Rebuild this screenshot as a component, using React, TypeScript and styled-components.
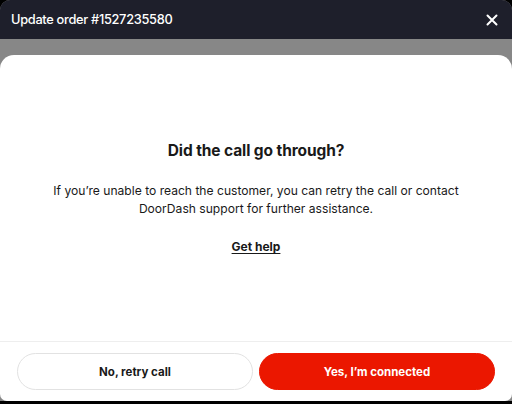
import styled, { createGlobalStyle } from "styled-components";

const GlobalStyle = createGlobalStyle`
  html, body {
    margin: 0;
    padding: 0;
    background: #000;
  }
  body {
    font-family: Inter, "Noto Sans", sans-serif;
  }
`;

const Page = styled.div`
  width: 512px;
  height: 404px;
  background: #000;
  overflow: hidden;
`;

const Window = styled.div`
  width: 512px;
  height: 401px;
  display: flex;
  flex-direction: column;
  border-radius: 10px 10px 0 0;
  overflow: hidden;
  background: #878787;
`;

const TopBar = styled.header`
  height: 39px;
  flex: none;
  display: flex;
  align-items: center;
  justify-content: space-between;
  padding: 0 12px 0 11px;
  background: #1e1f2b;
  color: #fff;
`;

const TopTitle = styled.h1`
  margin: 0;
  font-size: 12.8px;
  font-weight: 500;
  letter-spacing: -0.3px;
`;

const CloseButton = styled.button`
  border: none;
  background: none;
  padding: 0;
  width: 16px;
  height: 16px;
  display: flex;
  align-items: center;
  justify-content: center;
  cursor: pointer;
`;

const Backdrop = styled.div`
  flex: 1;
  display: flex;
  flex-direction: column;
  padding-top: 16px;
`;

const Sheet = styled.section`
  flex: 1;
  display: flex;
  flex-direction: column;
  background: #fff;
  border-radius: 14px 14px 7px 7px;
`;

const Content = styled.div`
  flex: 1;
  display: flex;
  flex-direction: column;
  align-items: center;
  text-align: center;
  padding: 86px 40px 0;
`;

const Heading = styled.h2`
  margin: 0;
  font-size: 15.5px;
  font-weight: 700;
  color: #191919;
  letter-spacing: -0.1px;
`;

const Message = styled.p`
  margin: 22px 0 0;
  font-size: 12.1px;
  line-height: 18px;
  color: #191919;
`;

const HelpLink = styled.a`
  margin-top: 21px;
  font-size: 12px;
  font-weight: 700;
  color: #191919;
  text-decoration: underline;
  text-underline-offset: 2px;
  cursor: pointer;
`;

const Footer = styled.footer`
  flex: none;
  display: flex;
  gap: 6px;
  padding: 11px 17px 11px;
  border-top: 1px solid #eeeeee;
`;

const ActionButton = styled.button<{ $primary?: boolean }>`
  flex: 1;
  height: 37px;
  border-radius: 19px;
  font-family: inherit;
  font-size: 11.5px;
  font-weight: 700;
  cursor: pointer;
  border: 1px solid ${(p) => (p.$primary ? "#eb1700" : "#e2e2e2")};
  background: ${(p) => (p.$primary ? "#eb1700" : "#fff")};
  color: ${(p) => (p.$primary ? "#fff" : "#191919")};
`;

function App() {
  return (
    <Page>
      <GlobalStyle />
      <Window>
        <TopBar>
          <TopTitle>Update order #1527235580</TopTitle>
          <CloseButton aria-label="Close">
            <svg width="12" height="12" viewBox="0 0 12 12">
              <path d="M1.5 1.5 L10.5 10.5 M10.5 1.5 L1.5 10.5" stroke="#fff" strokeWidth="2" strokeLinecap="round" />
            </svg>
          </CloseButton>
        </TopBar>
        <Backdrop>
          <Sheet>
            <Content>
              <Heading>Did the call go through?</Heading>
              <Message>
                If you’re unable to reach the customer, you can retry the call or contact
                <br />
                DoorDash support for further assistance.
              </Message>
              <HelpLink>Get help</HelpLink>
            </Content>
            <Footer>
              <ActionButton>No, retry call</ActionButton>
              <ActionButton $primary>Yes, I’m connected</ActionButton>
            </Footer>
          </Sheet>
        </Backdrop>
      </Window>
    </Page>
  );
}

export default App;
